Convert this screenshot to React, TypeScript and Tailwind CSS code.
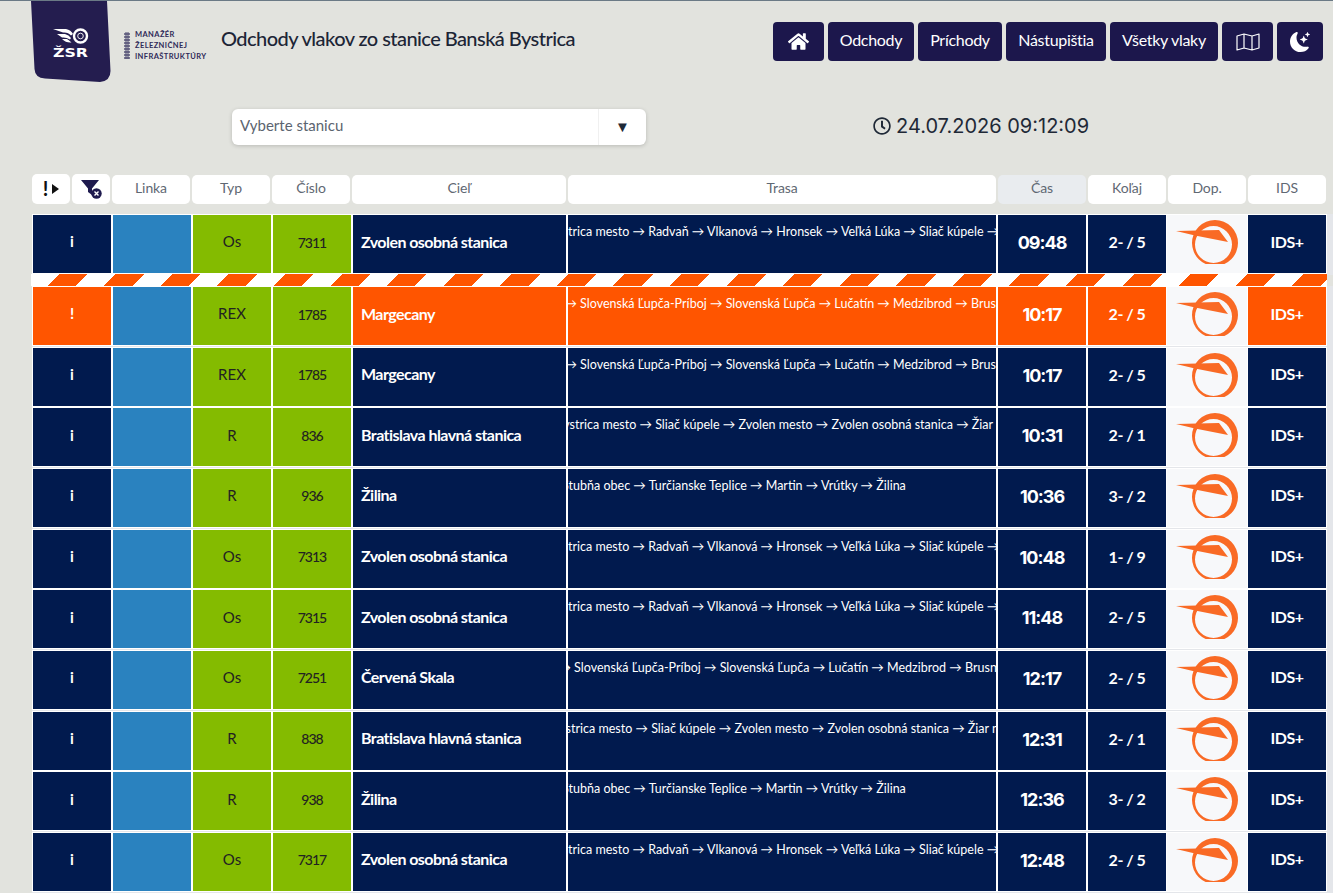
import React from "react";
import { FaHome, FaRegClock } from "react-icons/fa";
import { BsMoonStarsFill } from "react-icons/bs";

const A = "Banská Bystrica mesto → Radvaň → Vlkanová → Hronsek → Veľká Lúka → Sliač kúpele → Sliač → Zvolen mesto → Zvolen osobná stanica";
const B = "Banská Bystrica mesto → Sliač kúpele → Zvolen mesto → Zvolen osobná stanica → Žiar nad Hronom → Nová Baňa";
const C = "Banská Bystrica → Slovenská Ľupča-Príboj → Slovenská Ľupča → Lučatín → Medzibrod → Brusno → Podbrezová";
const D = "Banská Bystrica → Stubňa obec → Turčianske Teplice → Martin → Vrútky → Žilina";

type Row = { mark: string; typ: string; num: string; dest: string; route: string; off: string; time: string; track: string; alert?: boolean };

const rows: Row[] = [
  { mark: "i", typ: "Os", num: "7311", dest: "Zvolen osobná stanica", route: A, off: "-ml-[62px]", time: "09:48", track: "2- / 5" },
  { mark: "!", typ: "REX", num: "1785", dest: "Margecany", route: C, off: "-ml-[93px]", time: "10:17", track: "2- / 5", alert: true },
  { mark: "i", typ: "REX", num: "1785", dest: "Margecany", route: C, off: "-ml-[93px]", time: "10:17", track: "2- / 5" },
  { mark: "i", typ: "R", num: "836", dest: "Bratislava hlavná stanica", route: B, off: "-ml-[55px]", time: "10:31", track: "2- / 1" },
  { mark: "i", typ: "R", num: "936", dest: "Žilina", route: D, off: "-ml-[111px]", time: "10:36", track: "3- / 2" },
  { mark: "i", typ: "Os", num: "7313", dest: "Zvolen osobná stanica", route: A, off: "-ml-[62px]", time: "10:48", track: "1- / 9" },
  { mark: "i", typ: "Os", num: "7315", dest: "Zvolen osobná stanica", route: A, off: "-ml-[62px]", time: "11:48", track: "2- / 5" },
  { mark: "i", typ: "Os", num: "7251", dest: "Červená Skala", route: C, off: "-ml-[99px]", time: "12:17", track: "2- / 5" },
  { mark: "i", typ: "R", num: "838", dest: "Bratislava hlavná stanica", route: B, off: "-ml-[59px]", time: "12:31", track: "2- / 1" },
  { mark: "i", typ: "R", num: "938", dest: "Žilina", route: D, off: "-ml-[111px]", time: "12:36", track: "3- / 2" },
  { mark: "i", typ: "Os", num: "7317", dest: "Zvolen osobná stanica", route: A, off: "-ml-[62px]", time: "12:48", track: "2- / 5" },
];

const cols = "grid grid-cols-[80px_80px_80px_80px_215px_430px_90px_80px_80px_80px]";

function ZsrLogo() {
  return (
    <svg width="82" height="82" viewBox="0 0 82 82" className="shrink-0">
      <path d="M1 0 L77 0 L80.500 70 Q80.500 80 70 81 L15 77.500 Q5 77 4.500 68 Z" fill="#241d4f" />
      <path d="M23 28 L36 28 Q41 29 43 33 L41 34.500 Q38 31 33 31.500 Z M27 33 L35 33 Q39 34 41 37 L40 38.500 Q36 36 32 36.500 Z M32 38 L37 38 Q39 39 41.500 41.500 Q36 42 32 38 Z" fill="#fff" />
      <circle cx="50.500" cy="35" r="6.500" fill="none" stroke="#fff" strokeWidth="2.400" />
      <circle cx="50.500" cy="35" r="2.800" fill="none" stroke="#fff" strokeWidth="0.900" />
      <text x="40.500" y="55.500" textAnchor="middle" fill="#fff" fontFamily="'DejaVu Sans', sans-serif" fontWeight="700" fontSize="12" textLength="35" lengthAdjust="spacingAndGlyphs">ŽSR</text>
    </svg>
  );
}

function RailIcon() {
  return (
    <svg width="6" height="27" viewBox="0 0 6 27" className="shrink-0">
      <path d="M2 0 V27 M4 0 V27" stroke="#4d4a70" strokeWidth="1" />
      {[2, 5, 8, 11, 14, 17, 20, 23, 26].map((y) => (
        <path key={y} d={`M0 ${y} H6`} stroke="#4d4a70" strokeWidth="1.400" />
      ))}
    </svg>
  );
}

function ZssLogo() {
  return (
    <svg width="80" height="49" viewBox="0 0 80 49" className="block">
      <path
        fillRule="evenodd"
        d="M25 28 A23 23 0 1 1 71 28 A23 23 0 1 1 25 28 Z M28 29.500 A18.500 18.500 0 1 0 65 29.500 A18.500 18.500 0 1 0 28 29.500 Z"
        fill="#f96a25"
      />
      <path d="M9 16 L52 15 L61 27 L28 20.500 Z" fill="#f96a25" />
    </svg>
  );
}

function FilterIcon() {
  return (
    <svg width="21" height="19" viewBox="0 0 21 19">
      <path d="M0 0 H18 L11 8.500 V15 L7 12 V8.500 Z" fill="#1e1a4e" />
      <circle cx="15.500" cy="13.500" r="5.200" fill="#1e1a4e" />
      <path d="M13.500 11.500 L17.500 15.500 M17.500 11.500 L13.500 15.500" stroke="#fff" strokeWidth="1.400" />
    </svg>
  );
}

function MapIcon() {
  return (
    <svg width="24" height="18" viewBox="0 0 24 18" fill="none" stroke="#fff" strokeWidth="1.200" strokeLinejoin="round">
      <path d="M1 3 L8 1 L16 3 L23 1 V15 L16 17 L8 15 L1 17 Z M8 1 V15 M16 3 V17" />
    </svg>
  );
}

function HeadCell({ label, active }: { label: string; active?: boolean }) {
  return (
    <div className={`h-[29px] pb-[3px] rounded-[5px] flex items-center justify-center text-[14px] tracking-[-0.1px] text-[#5f6873] ${active ? "bg-[#e9ecef]" : "bg-white"}`}>
      {label}
    </div>
  );
}

function NavBtn({ children, w }: { children: React.ReactNode; w: string }) {
  return (
    <div className={`${w} h-[39px] rounded-[4px] bg-[#1c174c] text-white text-[16px] tracking-[-0.3px] flex items-center justify-center`}>
      {children}
    </div>
  );
}

function RowView({ r }: { r: Row }) {
  const base = r.alert ? "bg-[#ff5500] text-white" : "bg-[#011a4e] text-white";
  const cell = "h-[60px] border border-white flex items-center justify-center overflow-hidden";
  return (
    <div className={`${cols} h-[60.67px] bg-[#e4e6ea] items-start`}>
      <div className={`${cell} ${base} pb-[5px] text-[15px] font-bold`}>{r.mark}</div>
      <div className={`${cell} bg-[#2a82bf]`} />
      <div className={`${cell} pb-[5px] bg-[#84bb00] text-[#222] text-[15px]`}>{r.typ}</div>
      <div className={`${cell} pb-[4px] bg-[#84bb00] text-[#222] text-[14px] font-medium tracking-[-1px]`}>{r.num}</div>
      <div className={`h-[60px] border border-white flex items-center ${base} pb-[5px] pl-2 text-[16px] font-bold tracking-[-0.55px] whitespace-nowrap overflow-hidden`}>{r.dest}</div>
      <div className={`h-[60px] border border-white overflow-hidden ${base} pt-[7px] text-[12.5px] leading-[20px] whitespace-nowrap`}>
        <div className={r.off}>{r.route}</div>
      </div>
      <div className={`${cell} ${base} pb-[3px] font-['Inter',sans-serif] text-[18px] font-bold tracking-[-1px]`}>{r.time}</div>
      <div className={`${cell} ${base} pb-[4px] text-[16px] font-bold tracking-[-0.5px]`}>{r.track}</div>
      <div className="h-[60px] bg-[#f7f8fa] border-y border-white overflow-hidden"><ZssLogo /></div>
      <div className={`${cell} ${base} pb-[5px] text-[16px] font-bold tracking-[-0.5px]`}>IDS+</div>
    </div>
  );
}

export default function App() {
  return (
    <div className="w-[1333px] h-[893px] overflow-hidden bg-[#e2e3de] border-t border-[#6b7a86] font-['Lato','Noto_Sans',sans-serif] text-[#1f2937]">
      <div className="flex items-start pl-[30px] pr-[10px]">
        <ZsrLogo />
        <div className="flex items-center gap-[5px] ml-[12px] mt-[28px] w-[88px]">
          <RailIcon />
          <div className="text-[7.5px] leading-[11px] font-bold tracking-[0.4px] text-[#2f2a58] whitespace-nowrap">
            <div>MANAŽÉR</div>
            <div>ŽELEZNIČNEJ</div>
            <div>INFRAŠTRUKTÚRY</div>
          </div>
        </div>
        <h1 className="ml-[9px] mt-[23px] text-[20px] leading-[28px] font-medium tracking-[-0.56px] text-[#1c2536] whitespace-nowrap">Odchody vlakov zo stanice Banská Bystrica</h1>
        <div className="ml-auto mt-[21px] flex gap-[4px]">
          <NavBtn w="w-[51px]"><FaHome className="text-[21px]" /></NavBtn>
          <NavBtn w="w-[86px]"><span className="pb-[3px]">Odchody</span></NavBtn>
          <NavBtn w="w-[84px]"><span className="pb-[3px]">Príchody</span></NavBtn>
          <NavBtn w="w-[100px]"><span className="pb-[3px]">Nástupištia</span></NavBtn>
          <NavBtn w="w-[108px]"><span className="pb-[3px]">Všetky vlaky</span></NavBtn>
          <NavBtn w="w-[51px]"><MapIcon /></NavBtn>
          <NavBtn w="w-[46px]"><BsMoonStarsFill className="text-[20px]" /></NavBtn>
        </div>
      </div>

      <div className="flex items-center mt-[26px] pl-[232px]">
        <div className="w-[414px] h-[36px] rounded-[6px] bg-white shadow-[0_1px_4px_rgba(0,0,0,0.18)] flex items-center">
          <div className="flex-1 pl-2 pb-[3px] text-[15px] text-[#5b6470]">Vyberte stanicu</div>
          <div className="w-[48px] h-full border-l border-[#f0f0f0] flex items-center justify-center pb-[2px] text-[15px] text-[#1f2937]">▼</div>
        </div>
        <div className="ml-[227px] pb-[2px] flex items-center gap-[5px] font-['Inter',sans-serif] text-[20px] text-[#1f2937] whitespace-nowrap">
          <FaRegClock className="text-[18px]" />
          <span>24.07.2026 09:12:09</span>
        </div>
      </div>

      <div className="mt-[29px] pl-[32px]">
        <div className={`${cols} items-center`}>
          <div className="flex gap-[2px] pr-[2px]">
            <div className="w-[38px] h-[30px] rounded-[5px] bg-white flex items-center justify-center text-[#111] font-bold text-[20px] gap-[4px]">
              <span className="pb-[2px]">!</span>
              <svg width="7" height="10" viewBox="0 0 7 10"><path d="M0 0 L7 5 L0 10 Z" fill="#111" /></svg>
            </div>
            <div className="w-[38px] h-[30px] rounded-[5px] bg-white flex items-center justify-center"><FilterIcon /></div>
          </div>
          <div className="mr-[2px]"><HeadCell label="Linka" /></div>
          <div className="mr-[2px]"><HeadCell label="Typ" /></div>
          <div className="mr-[2px]"><HeadCell label="Číslo" /></div>
          <div className="mr-[1px]"><HeadCell label="Cieľ" /></div>
          <div className="mx-[1px]"><HeadCell label="Trasa" /></div>
          <div className="mx-[1px]"><HeadCell label="Čas" active /></div>
          <div className="mx-[1px]"><HeadCell label="Koľaj" /></div>
          <div className="mx-[1px]"><HeadCell label="Dop." /></div>
          <div className="mx-[1px]"><HeadCell label="IDS" /></div>
        </div>

        <div className="mt-[10px]">
          <div className="h-[60px] overflow-visible">
            <RowView r={rows[0]} />
          </div>
          <div className="h-[12px] -ml-px w-[1296px] bg-[repeating-linear-gradient(135deg,#ffffff_0px,#ffffff_20px,#ff5500_20px,#ff5500_40px)]" />
          {rows.slice(1).map((r, i) => (
            <RowView key={i} r={r} />
          ))}
        </div>
      </div>
    </div>
  );
}
